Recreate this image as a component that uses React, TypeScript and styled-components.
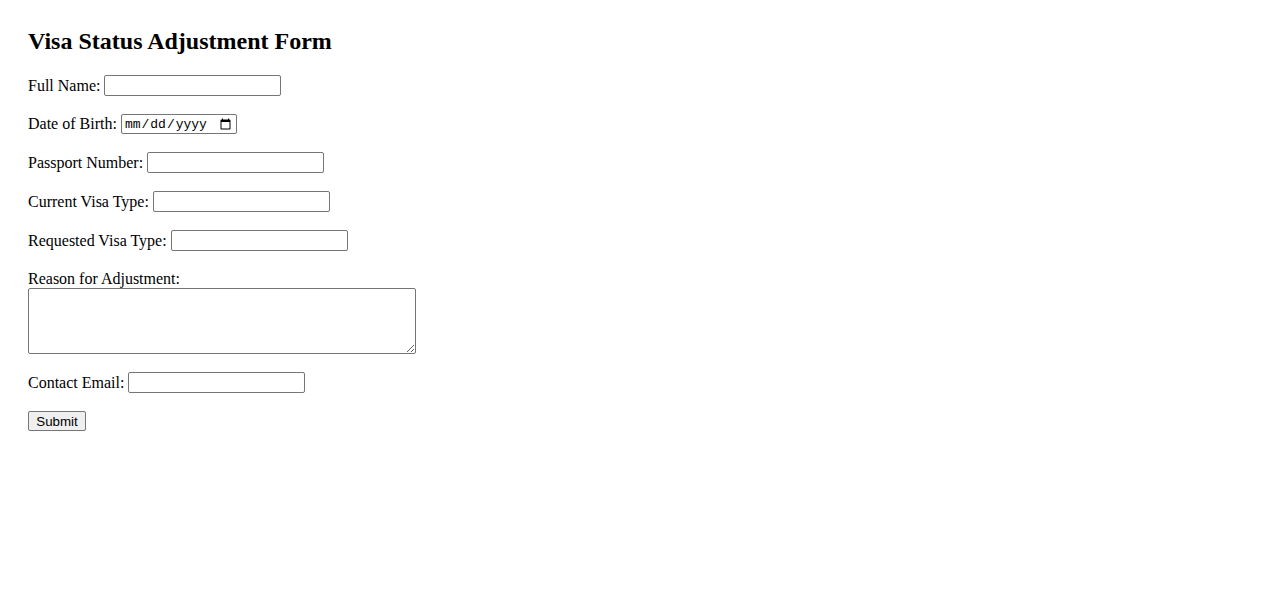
import styled, { createGlobalStyle } from 'styled-components';

const GlobalStyle = createGlobalStyle`
  body {
    margin: 0;
    background: #fff;
    color: #000;
    font-family: "Liberation Serif", "Times New Roman", serif;
    font-size: 16px;
  }
`;

function App() {
    return (
        <Page>
            <GlobalStyle/>
            <Title>Visa Status Adjustment Form</Title>
            <Form onSubmit={(e) => e.preventDefault()}>
                <Row>
                    <Label htmlFor="fullName">Full Name:</Label>
                    <TextField id="fullName"/>
                </Row>
                <Row>
                    <Label htmlFor="dob">Date of Birth:</Label>
                    <DateField id="dob"/>
                </Row>
                <Row>
                    <Label htmlFor="passport">Passport Number:</Label>
                    <TextField id="passport"/>
                </Row>
                <Row>
                    <Label htmlFor="currentVisa">Current Visa Type:</Label>
                    <TextField id="currentVisa"/>
                </Row>
                <Row>
                    <Label htmlFor="requestedVisa">Requested Visa Type:</Label>
                    <TextField id="requestedVisa"/>
                </Row>
                <Stack>
                    <Label htmlFor="reason">Reason for Adjustment:</Label>
                    <Area id="reason"/>
                </Stack>
                <Row>
                    <Label htmlFor="email">Contact Email:</Label>
                    <TextField id="email" type="email"/>
                </Row>
                <Row>
                    <Button type="submit">Submit</Button>
                </Row>
            </Form>
        </Page>
    );
}

export default App;

const Page = styled.div`
  padding: 28px 28px;
`;

const Title = styled.h2`
  margin: 0 0 20px;
  font-size: 24px;
  font-weight: bold;
`;

const Form = styled.form`
  display: flex;
  flex-direction: column;
  align-items: flex-start;
  gap: 18px;
`;

const Row = styled.div`
  display: flex;
  align-items: center;
  gap: 4px;
`;

const Stack = styled.div`
  display: flex;
  flex-direction: column;
  align-items: flex-start;
  margin-top: 1px;
`;

const Label = styled.label`
  font-size: 16px;
  line-height: normal;
`;

const TextField = styled.input.attrs((props) => ({
    type: props.type || 'text'
}))`
  box-sizing: border-box;
  width: 177px;
  height: 21px;
  padding: 1px 2px;
  border: 1px solid #767676;
  border-radius: 2px;
  font-family: "Liberation Sans", Arial, sans-serif;
  font-size: 13.333px;
`;

const DateField = styled.input.attrs({ type: 'date' })`
  box-sizing: border-box;
  width: 116px;
  height: 20px;
  padding: 1px 2px;
  border: 1px solid #767676;
  border-radius: 2px;
  font-family: "Liberation Mono", monospace;
  font-size: 13px;
`;

const Area = styled.textarea`
  box-sizing: border-box;
  width: 388px;
  height: 66px;
  padding: 2px;
  border: 1px solid #767676;
  border-radius: 2px;
  font-family: "Liberation Mono", monospace;
  font-size: 13.333px;
`;

const Button = styled.button`
  box-sizing: border-box;
  width: 58px;
  height: 20px;
  padding: 1px 6px;
  background: #efefef;
  border: 1px solid #767676;
  border-radius: 2px;
  color: #000;
  font-family: "Liberation Sans", Arial, sans-serif;
  font-size: 13.333px;
`;
